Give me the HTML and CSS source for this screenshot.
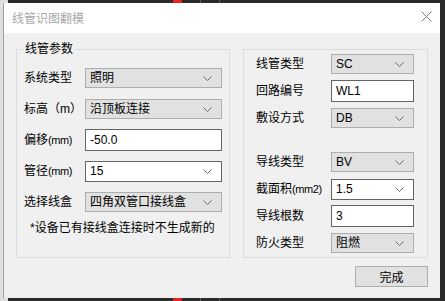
FILE: index.html
```html
<!DOCTYPE html>
<html lang="zh">

<head>
    <meta charset="UTF-8">
    <meta name="viewport" content="width=device-width, initial-scale=1.0">
    <title>线管识图翻模</title>
    <link rel="stylesheet" href="styles.css">
</head>

<body>
    <div class="strip">
        <span class="strip-light"></span>
        <span class="strip-red"></span>
        <span class="strip-line"></span>
        <span class="strip-line"></span>
    </div>
    <div class="frame">
        <div class="edge"></div>
        <div class="dialog">
            <div class="titlebar">
                <span class="title">线管识图翻模</span>
                <svg class="close" width="11" height="11" viewBox="0 0 11 11">
                    <path d="M0.5 0.5 L10.5 10.5 M10.5 0.5 L0.5 10.5" stroke="#7a7a7a" stroke-width="1" fill="none" />
                </svg>
            </div>
            <div class="content">
                <div class="groups">
                    <fieldset class="group group-left">
                        <legend>线管参数</legend>
                        <div class="row">
                            <span class="label">系统类型</span>
                            <div class="combo">照明<svg class="arrow" width="9" height="5" viewBox="0 0 9 5"><path d="M0.5 0.5 L4.5 4.5 L8.5 0.5" stroke="#6a6a6a" fill="none" /></svg></div>
                        </div>
                        <div class="row">
                            <span class="label">标高（m）</span>
                            <div class="combo">沿顶板连接<svg class="arrow" width="9" height="5" viewBox="0 0 9 5"><path d="M0.5 0.5 L4.5 4.5 L8.5 0.5" stroke="#6a6a6a" fill="none" /></svg></div>
                        </div>
                        <div class="row">
                            <span class="label">偏移<span class="unit">(mm)</span></span>
                            <div class="text-box">-50.0</div>
                        </div>
                        <div class="row">
                            <span class="label">管径<span class="unit">(mm)</span></span>
                            <div class="combo editable">15<svg class="arrow" width="9" height="5" viewBox="0 0 9 5"><path d="M0.5 0.5 L4.5 4.5 L8.5 0.5" stroke="#6a6a6a" fill="none" /></svg></div>
                        </div>
                        <div class="row">
                            <span class="label">选择线盒</span>
                            <div class="combo">四角双管口接线盒<svg class="arrow" width="9" height="5" viewBox="0 0 9 5"><path d="M0.5 0.5 L4.5 4.5 L8.5 0.5" stroke="#6a6a6a" fill="none" /></svg></div>
                        </div>
                        <p class="note">*设备已有接线盒连接时不生成新的</p>
                    </fieldset>

                    <div class="group group-right">
                        <div class="row">
                            <span class="label">线管类型</span>
                            <div class="combo">SC<svg class="arrow" width="9" height="5" viewBox="0 0 9 5"><path d="M0.5 0.5 L4.5 4.5 L8.5 0.5" stroke="#6a6a6a" fill="none" /></svg></div>
                        </div>
                        <div class="row">
                            <span class="label">回路编号</span>
                            <div class="text-box">WL1</div>
                        </div>
                        <div class="row">
                            <span class="label">敷设方式</span>
                            <div class="combo">DB<svg class="arrow" width="9" height="5" viewBox="0 0 9 5"><path d="M0.5 0.5 L4.5 4.5 L8.5 0.5" stroke="#6a6a6a" fill="none" /></svg></div>
                        </div>
                        <div class="row spaced">
                            <span class="label">导线类型</span>
                            <div class="combo">BV<svg class="arrow" width="9" height="5" viewBox="0 0 9 5"><path d="M0.5 0.5 L4.5 4.5 L8.5 0.5" stroke="#6a6a6a" fill="none" /></svg></div>
                        </div>
                        <div class="row">
                            <span class="label">截面积<span class="unit">(mm2)</span></span>
                            <div class="combo editable">1.5<svg class="arrow" width="9" height="5" viewBox="0 0 9 5"><path d="M0.5 0.5 L4.5 4.5 L8.5 0.5" stroke="#6a6a6a" fill="none" /></svg></div>
                        </div>
                        <div class="row">
                            <span class="label">导线根数</span>
                            <div class="text-box">3</div>
                        </div>
                        <div class="row">
                            <span class="label">防火类型</span>
                            <div class="combo">阻燃<svg class="arrow" width="9" height="5" viewBox="0 0 9 5"><path d="M0.5 0.5 L4.5 4.5 L8.5 0.5" stroke="#6a6a6a" fill="none" /></svg></div>
                        </div>
                    </div>
                </div>

                <div class="actions">
                    <button type="button" class="button">完成</button>
                </div>
            </div>
        </div>
    </div>
    <div class="strip">
        <span class="strip-light"></span>
        <span class="strip-red"></span>
        <span class="strip-line"></span>
        <span class="strip-line"></span>
    </div>
</body>

</html>
```

FILE: styles.css
```css
* {
    padding: 0;
    margin: 0;
    box-sizing: border-box;
    font-family: 'Liberation Sans', 'Noto Sans CJK SC', sans-serif;
}

body {
    background: #2b2b2b;
    width: 445px;
    height: 301px;
    overflow: hidden;
}

.strip {
    display: flex;
    height: 3px;
}

.strip-light {
    width: 8px;
    background: #dedede;
}

.strip-red {
    width: 9px;
    margin-left: 165px;
    background: #e8221f;
}

.strip-line {
    width: 1px;
    margin-left: 18px;
    background: #5a5a5a;
}

.frame {
    display: flex;
    height: 295px;
}

.edge {
    width: 3px;
    background: #dedede;
}

.dialog {
    width: 437px;
    border-left: 1px solid #a0a0a0;
    background: #f0f0f0;
    display: flex;
    flex-direction: column;
}

.titlebar {
    height: 30px;
    background: #fff;
    display: flex;
    align-items: center;
    justify-content: space-between;
    padding: 0 8px 0 8px;
}

.title {
    font-size: 12px;
    line-height: 16px;
    color: #a8a8a8;
    margin-top: 2px;
}

.close {
    margin-top: -3px;
}

.content {
    flex: 1;
    display: flex;
    flex-direction: column;
}

.groups {
    display: flex;
    height: 225px;
    padding: 8px 0 0 12px;
    align-items: stretch;
}

.group {
    border: 1px solid #dcdcdc;
}

.group-left {
    width: 214px;
    min-width: 0;
    padding: 0 7px;
    display: flex;
    flex-direction: column;
    gap: 9px;
}

legend {
    font-size: 12px;
    line-height: 16px;
    padding: 0 1px;
    margin-bottom: 10px;
    color: #000;
}

.group-right {
    width: 185px;
    margin: 8px 0 0 13px;
    padding: 3px 13px 0 12px;
    display: flex;
    flex-direction: column;
    gap: 5px;
}

.row {
    display: flex;
    align-items: center;
    height: 22px;
}

.row.spaced {
    margin-top: 17px;
}

.label {
    font-size: 12px;
    line-height: 16px;
    color: #000;
    white-space: nowrap;
}

.unit {
    font-size: 11px;
    letter-spacing: -0.4px;
}

.group-left .label {
    width: 61px;
}

.group-right .label {
    width: 75px;
}

.combo,
.text-box {
    flex: 1;
    display: flex;
    align-items: center;
    justify-content: space-between;
    font-size: 12px;
    line-height: 16px;
    color: #000;
    padding: 0 9px 0 4px;
    white-space: nowrap;
}

.combo {
    height: 20px;
    background: #e1e1e1;
    border: 1px solid #adadad;
}

.combo.editable {
    height: 21px;
    background: #fff;
    border-color: #646464;
}

.text-box {
    height: 22px;
    background: #fff;
    border: 1px solid #646464;
}

.note {
    font-size: 12px;
    line-height: 16px;
    color: #000;
    padding-left: 6px;
    margin-top: -2px;
    white-space: nowrap;
}

.actions {
    display: flex;
    justify-content: flex-end;
    padding: 8px 12px 0 0;
}

.button {
    width: 73px;
    height: 21px;
    background: #e1e1e1;
    border: 1px solid #adadad;
    font-size: 12px;
    color: #000;
}
```
